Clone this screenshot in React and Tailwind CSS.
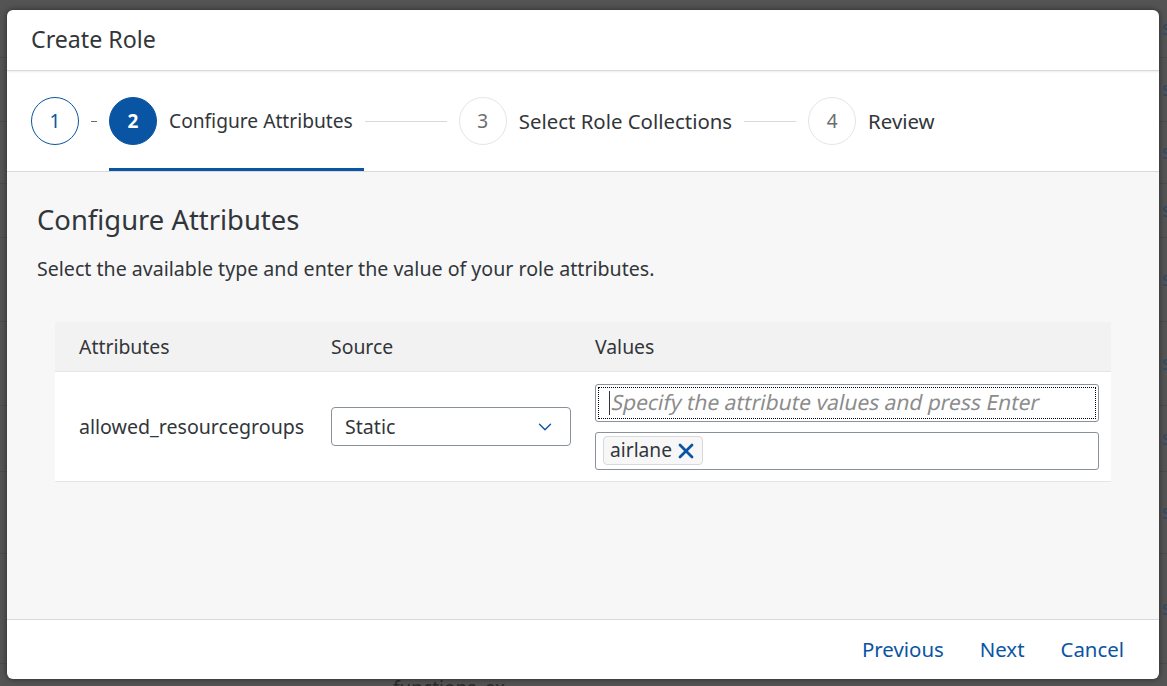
import { ChevronDown, X } from 'lucide-react'

function Step({ n, label, state, size = 'text-[20.4px]' }) {
  const circle =
    state === 'active'
      ? 'bg-[#0a55a3] text-white border-[#0a55a3] font-bold'
      : state === 'done'
      ? 'bg-white text-[#0a55a3] border-[#0a55a3]'
      : 'bg-white text-[#6a6d70] border-[#e5e5e5]'
  return (
    <div className="flex items-center gap-3">
      <div className={`w-12 h-12 rounded-full border flex items-center justify-center text-[19px] ${circle}`}>
        {n}
      </div>
      {label && <span className={`${size} text-[#32363a]`}>{label}</span>}
    </div>
  )
}

function Backdrop() {
  return (
    <div className="absolute inset-0 bg-[#545454] overflow-hidden">
      {/* rows of the page behind the dialog */}
      <div className="flex flex-col">
        {[58, 64, 62, 54, 84, 84, 66, 82, 110].map((h, i) => (
          <div key={i} style={{ height: h }} className="border-b border-[#4c4c4c] flex items-center justify-end">
            <span className="text-[19px] text-[#2f4a66] mr-[-4px]">s</span>
          </div>
        ))}
      </div>
      <span className="absolute left-[393px] top-[674px] text-[19px] text-[#2b2b2b]">functions_ex</span>
    </div>
  )
}

export default function App() {
  return (
    <div className="relative w-[1167px] h-[686px] overflow-hidden" style={{ fontFamily: '"Noto Sans", sans-serif' }}>
      <Backdrop />
      <div className="absolute left-[7px] top-[10px] w-[1152px] h-[669px] bg-white rounded-md shadow-[0_0_6px_rgba(0,0,0,0.5)] flex flex-col overflow-hidden">
        {/* Header */}
        <div className="h-[61px] shrink-0 flex items-center px-6 pb-[2px] border-b border-[#d9d9d9] shadow-[0_1px_2px_rgba(0,0,0,0.08)]">
          <h1 className="text-[23.2px] text-[#32363a]">Create Role</h1>
        </div>

        {/* Stepper */}
        <div className="h-[101px] shrink-0 flex items-center px-6 border-b border-[#d9d9d9] relative">
          <Step n="1" state="done" />
          <div className="w-[6px] h-px bg-[#6a6d70] mx-[12px]" />
          <Step n="2" label="Configure Attributes" state="active" size="text-[19.2px]" />
          <div className="w-[82px] h-px bg-[#d9d9d9] mx-3" />
          <Step n="3" label="Select Role Collections" state="inactive" />
          <div className="w-[52px] h-px bg-[#d9d9d9] mx-3" />
          <Step n="4" label="Review" state="inactive" />
          <div className="absolute left-[102px] bottom-0 w-[255px] h-[3px] bg-[#0a55a3]" />
        </div>

        {/* Content */}
        <div className="flex-1 bg-[#f7f7f7] px-[30px] pt-[30px]">
          <h2 className="text-[27.4px] text-[#32363a] leading-9">Configure Attributes</h2>
          <p className="mt-[18px] text-[19.6px] leading-[26px] text-[#32363a]">
            Select the available type and enter the value of your role attributes.
          </p>

          <div className="mt-[40px] mx-[18px]">
            <div className="h-[50px] bg-[#f2f2f2] border-b border-[#e5e5e5] flex items-center text-[19.4px] text-[#32363a]">
              <div className="w-[276px] pl-6">Attributes</div>
              <div className="w-[264px]">Source</div>
              <div>Values</div>
            </div>
            <div className="h-[110px] bg-white border-b border-[#e5e5e5] flex items-center text-[19.6px] text-[#32363a]">
              <div className="w-[276px] pl-6">allowed_resourcegroups</div>
              <div className="w-[264px]">
                <div className="w-[240px] h-[39px] border border-[#89919a] rounded-[4px] flex items-center justify-between pl-[13px] pr-[14px]">
                  <span>Static</span>
                  <ChevronDown className="w-[22px] h-[22px] text-[#0a55a3]" strokeWidth={1.5} />
                </div>
              </div>
              <div className="flex flex-col gap-[10px]">
                <div className="w-[504px] h-[38px] border border-[#89919a] rounded-[3px] p-[2px] bg-white">
                  <div className="h-full border border-dotted border-black flex items-center pl-[10px]">
                    <div className="w-px h-[24px] bg-[#32363a]" />
                    <span className="inline-block -skew-x-12 text-[#8c8c8c] text-[21px] ml-[2px]">Specify the attribute values and press Enter</span>
                  </div>
                </div>
                <div className="w-[504px] h-[38px] border border-[#89919a] rounded-[3px] bg-white flex items-center px-[7px]">
                  <div className="h-[29px] flex items-center gap-[2px] pl-[6px] pr-[4px] rounded-[4px] border border-[#d9d9d9] bg-[#f7f7f7] text-[19.2px]">
                    <span>airlane</span>
                    <X className="w-[24px] h-[24px] text-[#0a55a3]" strokeWidth={2.8} />
                  </div>
                </div>
              </div>
            </div>
          </div>
        </div>

        {/* Footer */}
        <div className="h-[60px] shrink-0 border-t border-[#d9d9d9] flex items-center justify-end gap-9 pr-[35px] text-[20.4px] text-[#0a55a3]">
          <button>Previous</button>
          <button>Next</button>
          <button>Cancel</button>
        </div>
      </div>
    </div>
  )
}
